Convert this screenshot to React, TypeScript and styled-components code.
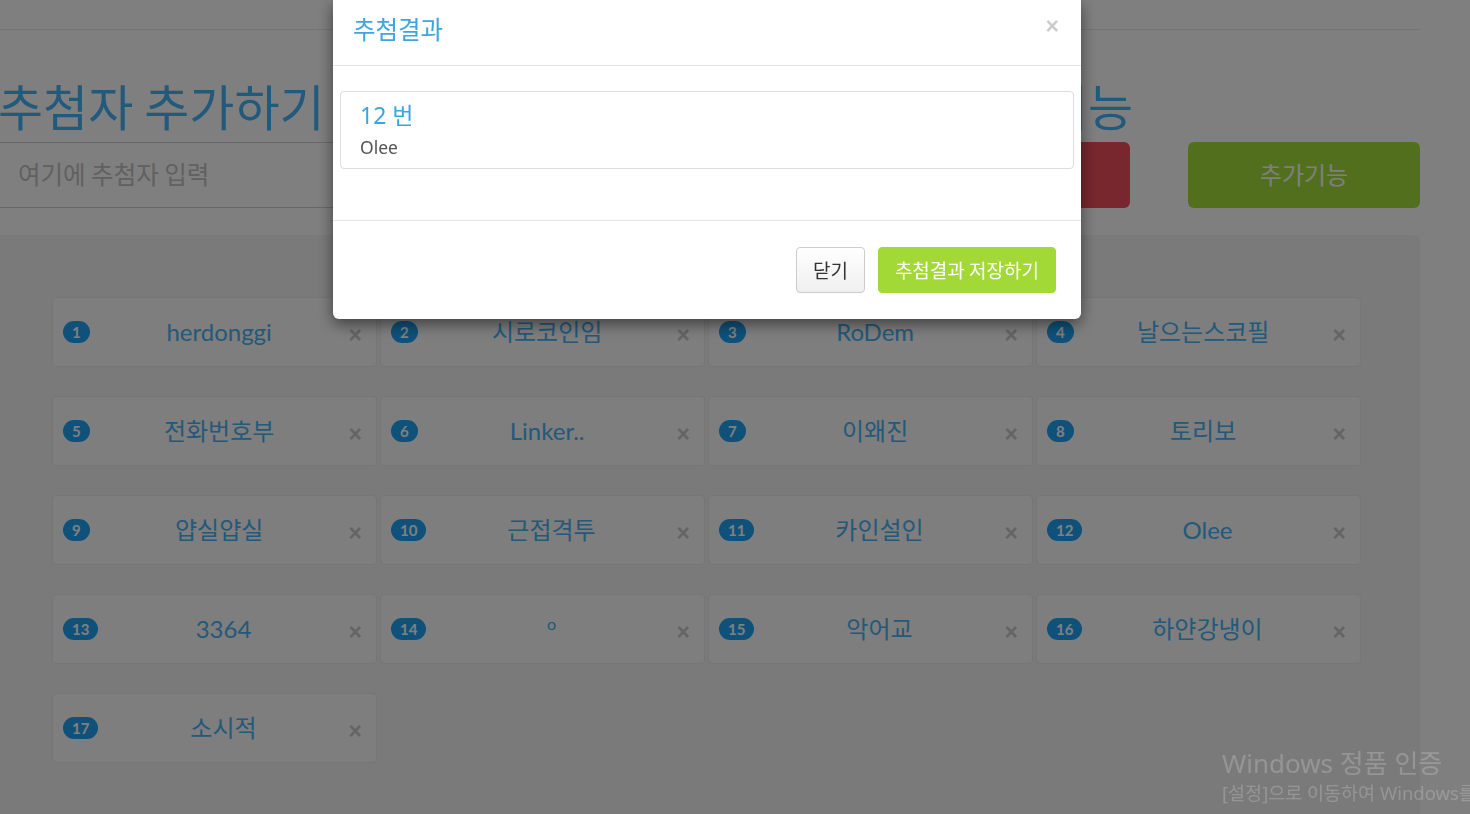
import React from "react";
import styled, { createGlobalStyle } from "styled-components";

const KR = `"Noto Sans CJK KR", "Noto Sans", sans-serif`;
const LATIN = `Lato, "Noto Sans CJK KR", sans-serif`;
const UI = `"Noto Sans", "Noto Sans CJK KR", sans-serif`;

const GlobalStyle = createGlobalStyle`
  html, body { margin: 0; padding: 0; background: #fff; overflow: hidden; }
  body { width: 1470px; height: 814px; font-family: ${UI}; }
  * { box-sizing: border-box; }
`;

const Page = styled.div`
  width: 1420px;
  height: 814px;
  overflow: hidden;
`;

const TopRule = styled.hr`
  margin: 29px 0 0;
  border: 0;
  border-top: 1px solid #e8e8e8;
`;

const Row = styled.div`
  display: grid;
  grid-template-columns: 1fr 232px 232px;
  column-gap: 58px;
`;

const HeadingRow = styled(Row)`
  margin-top: 47px;
`;

const Heading = styled.h1<{ $end?: boolean }>`
  margin: 0 ${(p) => (p.$end ? "-3px" : "0")} 0 ${(p) => (p.$end ? "0" : "-2px")};
  font: 400 49px/55px ${KR};
  color: #45b4f6;
  white-space: nowrap;
  justify-self: ${(p) => (p.$end ? "end" : "start")};
`;

const ControlsRow = styled(Row)`
  margin-top: 10px;
  height: 66px;
`;

const NameInput = styled.input`
  height: 66px;
  border: 1px solid #cfcfcf;
  border-left: 0;
  padding: 0 18px 4px;
  font: 400 24.5px ${KR};
  color: #333;
  background: #fff;
  outline: none;
  &::placeholder { color: #c2c2c2; }
`;

const ActionButton = styled.button<{ $bg: string }>`
  height: 66px;
  border: 0;
  border-radius: 6px;
  background: ${(p) => p.$bg};
  color: #fff;
  font: 400 24px ${KR};
  padding-bottom: 4px;
`;

const Panel = styled.section`
  margin-top: 27px;
  background: #f4f4f4;
  border-radius: 0 6px 0 0;
  padding: 62px 52px 40px;
  min-height: 640px;
`;

const CardGrid = styled.div`
  display: grid;
  grid-template-columns: repeat(4, 325px);
  column-gap: 3px;
  row-gap: 29px;
`;

const Card = styled.div`
  display: flex;
  align-items: center;
  height: 70px;
  background: #fcfcfc;
  border: 1px solid #ececec;
  border-radius: 4px;
  padding: 0 14px 0 10px;
`;

const Badge = styled.span`
  display: inline-flex;
  align-items: center;
  justify-content: center;
  height: 22px;
  padding: 0 9px;
  border-radius: 11px;
  background: #1fa2f2;
  color: #fff;
  font: 700 15px/1 ${LATIN};
`;

const Name = styled.span<{ $small?: boolean }>`
  flex: 1;
  text-align: center;
  font: 400 ${(p) => (p.$small ? "16px" : "24px")} / 1 ${LATIN};
  color: #48b2f2;
  ${(p) => (p.$small ? "transform: translateY(-5px);" : "")}
`;

const CardClose = styled.span`
  font: 700 23px/1 "Liberation Sans", sans-serif;
  color: #000;
  opacity: 0.2;
  margin-top: 6px;
`;

const Backdrop = styled.div`
  position: fixed;
  inset: 0;
  background: rgba(0, 0, 0, 0.5);
`;

const Modal = styled.div`
  position: fixed;
  left: 333px;
  top: 0;
  width: 748px;
  background: #fff;
  border-radius: 0 0 6px 6px;
  box-shadow: 0 5px 15px rgba(0, 0, 0, 0.5);
`;

const ModalHeader = styled.div`
  display: flex;
  align-items: center;
  justify-content: space-between;
  height: 66px;
  padding: 0 22px 8px 20px;
  border-bottom: 1px solid #e5e5e5;
`;

const ModalTitle = styled.h4`
  margin: 0;
  font: 400 24.5px/30px ${KR};
  color: #3fa3de;
`;

const ModalClose = styled.span`
  font: 700 23px/1 "Liberation Sans", sans-serif;
  color: #000;
  opacity: 0.2;
  margin-bottom: 4px;
`;

const ModalBody = styled.div`
  padding: 25px 7px 51px;
`;

const ResultBox = styled.div`
  border: 1px solid #ddd;
  border-radius: 4px;
  padding: 8px 19px 8px;
`;

const ResultNo = styled.div`
  font: 400 23px/30px ${UI};
  color: #3fa3de;
`;

const ResultName = styled.div`
  margin-top: 4px;
  font: 400 17.5px/26px ${UI};
  color: #555;
`;

const ModalFooter = styled.div`
  display: flex;
  justify-content: flex-end;
  gap: 13px;
  padding: 26px 25px 26px 26px;
  border-top: 1px solid #e5e5e5;
`;

const FooterButton = styled.button<{ $primary?: boolean }>`
  height: 46px;
  padding: 0 16px 2px;
  border-radius: 4px;
  font: 400 19px ${KR};
  border: 1px solid ${(p) => (p.$primary ? "#a3d936" : "#ccc")};
  background: ${(p) => (p.$primary ? "#a3d936" : "linear-gradient(#fff, #efefef)")};
  color: ${(p) => (p.$primary ? "#fff" : "#333")};
`;

const Watermark = styled.div`
  position: fixed;
  left: 1222px;
  top: 746px;
  color: rgba(255, 255, 255, 0.2);
  white-space: nowrap;
  font-family: ${UI};
`;

const WatermarkTitle = styled.div`
  font-size: 26px;
  line-height: 34px;
`;

const WatermarkSub = styled.div`
  font-size: 18.5px;
  line-height: 26px;
`;

const entries = [
  "herdonggi",
  "시로코인임",
  "RoDem",
  "날으는스코필",
  "전화번호부",
  "Linker..",
  "이왜진",
  "토리보",
  "얍실얍실",
  "근접격투",
  "카인설인",
  "Olee",
  "3364",
  "o",
  "악어교",
  "하얀강냉이",
  "소시적",
];

export default function App() {
  return (
    <>
      <GlobalStyle />
      <Page>
        <TopRule />
        <HeadingRow>
          <Heading>추첨자 추가하기</Heading>
          <Heading $end>추첨 기능</Heading>
        </HeadingRow>
        <ControlsRow>
          <NameInput placeholder="여기에 추첨자 입력" />
          <ActionButton $bg="#f04f5e">추첨하기</ActionButton>
          <ActionButton $bg="#a4de3a">추가기능</ActionButton>
        </ControlsRow>
        <Panel>
          <CardGrid>
            {entries.map((name, i) => (
              <Card key={i}>
                <Badge>{i + 1}</Badge>
                <Name $small={name === "o"}>{name}</Name>
                <CardClose>×</CardClose>
              </Card>
            ))}
          </CardGrid>
        </Panel>
      </Page>
      <Backdrop />
      <Modal>
        <ModalHeader>
          <ModalTitle>추첨결과</ModalTitle>
          <ModalClose>×</ModalClose>
        </ModalHeader>
        <ModalBody>
          <ResultBox>
            <ResultNo>12 번</ResultNo>
            <ResultName>Olee</ResultName>
          </ResultBox>
        </ModalBody>
        <ModalFooter>
          <FooterButton>닫기</FooterButton>
          <FooterButton $primary>추첨결과 저장하기</FooterButton>
        </ModalFooter>
      </Modal>
      <Watermark>
        <WatermarkTitle>Windows 정품 인증</WatermarkTitle>
        <WatermarkSub>[설정]으로 이동하여 Windows를 정품 인증합니다.</WatermarkSub>
      </Watermark>
    </>
  );
}
